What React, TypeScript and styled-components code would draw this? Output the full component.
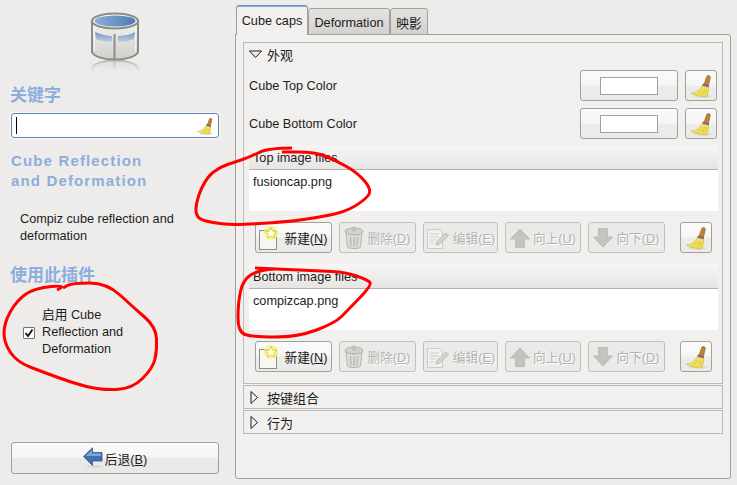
import React from 'react';
import styled, { createGlobalStyle } from 'styled-components';

const GlobalStyle = createGlobalStyle`
  html, body {
    margin: 0;
    padding: 0;
    background: #edecea;
  }

  body {
    font-family: "Liberation Sans", "Noto Sans CJK SC", sans-serif;
    font-size: 12.7px;
    color: #1c1c1c;
  }
`;

const Window = styled.div`
  position: relative;
  display: grid;
  grid-template-columns: 235px 1fr;
  width: 737px;
  height: 485px;
  overflow: hidden;
  background: #edecea;
`;

const Sidebar = styled.aside`
  display: flex;
  flex-direction: column;
  padding: 12px 16px 11px 11px;
`;

const Logo = styled.svg`
  display: block;
  align-self: center;
  width: 50px;
  height: 60px;
`;

const SideHeading = styled.h2<{ $gap: number }>`
  margin: ${p => p.$gap}px 0 0 -1px;
  font-size: 17px;
  line-height: 20px;
  font-weight: 700;
  color: #8daedd;
`;

const SearchBox = styled.div`
  display: flex;
  align-items: center;
  justify-content: space-between;
  box-sizing: border-box;
  height: 25px;
  margin-top: 7px;
  padding: 0 4px 0 4px;
  background: #fff;
  border: 1px solid #5f83b5;
  border-radius: 3px;
  box-shadow: 0 0 0 1px #f8f8f7;
`;

const Caret = styled.span`
  display: block;
  width: 1px;
  height: 17px;
  background: #000;
`;

const PluginTitle = styled.h1`
  margin: 13px 0 0;
  font-size: 15px;
  line-height: 20px;
  font-weight: 700;
  letter-spacing: 1.15px;
  color: #8daedd;
`;

const Description = styled.p`
  margin: 20px 0 0;
  padding-left: 9px;
  line-height: 17px;
`;

const EnableRow = styled.label`
  display: flex;
  align-items: center;
  gap: 7px;
  margin-top: 21px;
  padding-left: 12px;
  line-height: 17px;
`;

const CheckBox = styled.span`
  display: flex;
  align-items: center;
  justify-content: center;
  flex: none;
  box-sizing: border-box;
  width: 12px;
  height: 12px;
  background: #fff;
  border: 1px solid #77746f;
  border-radius: 1px;
`;

const EnableText = styled.span`
  width: 96px;
`;

const BackButton = styled.button`
  display: flex;
  align-items: center;
  justify-content: center;
  gap: 2px;
  box-sizing: border-box;
  height: 32px;
  margin-top: auto;
  padding: 0;
  font: inherit;
  color: inherit;
  border: 1px solid #a3a09b;
  border-radius: 3px;
  background: linear-gradient(#fbfbfb 0%, #f5f5f4 48%, #ebeae8 52%, #e9e8e6 100%);
`;

const Main = styled.main`
  display: flex;
  flex-direction: column;
  padding: 5px 6px 6px 0;
`;

const TabBar = styled.div`
  display: flex;
  align-items: flex-end;
  height: 30px;
  padding-left: 1px;
  margin-bottom: -1px;
`;

const Tab = styled.div<{ $active?: boolean; $width: number }>`
  position: relative;
  display: flex;
  align-items: center;
  justify-content: center;
  box-sizing: border-box;
  width: ${p => p.$width}px;
  height: ${p => (p.$active ? 30 : 27)}px;
  padding-top: ${p => (p.$active ? 0 : 2)}px;
  border: 1px solid #a3a09b;
  border-bottom: ${p => (p.$active ? '0' : '1px solid #a3a09b')};
  border-radius: 3px 3px 0 0;
  border-top-color: ${p => (p.$active ? '#6d93c5' : '#a3a09b')};
  box-shadow: ${p => (p.$active ? 'inset 0 1px 0 #8dacd6' : 'none')};
  background: ${p => (p.$active ? '#f1f0ee' : 'linear-gradient(#e4e3e1, #d3d2cf)')};
  z-index: ${p => (p.$active ? 1 : 0)};
`;

const TabPanel = styled.section`
  display: flex;
  flex-direction: column;
  flex: 1;
  box-sizing: border-box;
  gap: 1px;
  padding: 7px;
  background: #f1f0ee;
  border: 1px solid #a3a09b;
  border-radius: 0 3px 3px 3px;
`;

const Expander = styled.div<{ $open?: boolean }>`
  box-sizing: border-box;
  border: 1px solid #bcbab6;
  padding: 0 5px ${p => (p.$open ? 11 : 0)}px 5px;
`;

const ExpanderHead = styled.div`
  display: flex;
  align-items: center;
  gap: 5px;
  height: 22px;
  font-size: 13px;
`;

const ColorRow = styled.div`
  display: flex;
  align-items: center;
  gap: 7px;
  height: 31px;
  margin-top: 7px;

  ${ExpanderHead} + & {
    margin-top: 5px;
  }
`;

const RowLabel = styled.span`
  flex: 1;
`;

const Button = styled.button<{ $width: number; $disabled?: boolean }>`
  display: flex;
  align-items: center;
  justify-content: center;
  flex: none;
  gap: 3px;
  box-sizing: border-box;
  width: ${p => p.$width}px;
  height: 31px;
  padding: 0;
  font: inherit;
  color: ${p => (p.$disabled ? '#b3b2af' : 'inherit')};
  text-shadow: ${p => (p.$disabled ? '1px 1px 0 #fff' : 'none')};
  border: 1px solid ${p => (p.$disabled ? '#c2c0bc' : '#a3a09b')};
  border-radius: 3px;
  background: ${p => (p.$disabled
    ? '#ebeae8'
    : 'linear-gradient(#fafafa 0%, #f6f6f5 48%, #ececea 52%, #eaeae8 100%)')};
`;

const Swatch = styled.span`
  display: block;
  box-sizing: border-box;
  width: 58px;
  height: 18px;
  background: #fff;
  border: 1px solid #a3a09b;
`;

const ImageList = styled.div`
  margin-top: 6px;
  margin-right: -1px;
`;

const ToolbarRow = styled.div`
  display: flex;
  gap: 7px;
  margin-top: 11px;
  padding: 0 5px 0 6px;

  & > :last-child {
    margin-left: auto;
  }

  & + ${ImageList} {
    margin-top: 11px;
  }
`;

const ListHead = styled.div`
  box-sizing: border-box;
  height: 25px;
  padding: 6px 0 0 4px;
  background: linear-gradient(#f6f6f5, #e6e5e3);
  border-bottom: 1px solid #b4b2ae;
`;

const ListBody = styled.div`
  box-sizing: border-box;
  height: 41px;
  padding: 4px 4px;
  background: #fff;
  line-height: 17px;
`;

const Scribble = styled.svg`
  position: absolute;
  inset: 0;
  width: 737px;
  height: 485px;
  pointer-events: none;
`;

function Broom({ size = 24 }: { size?: number }) {
  return (
    <svg width={size} height={size} viewBox='2 1 20 22'>
      <ellipse cx='13.500' cy='21.300' rx='8.500' ry='1.500' fill='#dcdbd8' />
      <path d='M14.800 10.500 17.300 3.400c.6-1.700 3.500-1 3.200.8L18.800 11.500z' fill='#c08436' stroke='#8a5a20' strokeWidth='.6' />
      <path d='M13.800 9.800 19.500 11.500 19 13.400 13 11.700z' fill='#7d5a9c' />
      <path d='M13 11.700 19 13.400C19 17 18.300 20 17.300 22 14 21.900 7.500 21 2.800 18.600 7.500 18.200 11 16 13 11.700z' fill='#f2e35c' stroke='#c7ab30' strokeWidth='.5' />
      <path d='M9.500 19.800 13.500 14.500M13 20.800 15.500 15M15.800 21 17 15' stroke='#d0b436' strokeWidth='.6' fill='none' />
    </svg>
  );
}

function BackArrow() {
  return (
    <svg width='20' height='22' viewBox='0 0 20 22'>
      <ellipse cx='11' cy='19.500' rx='8' ry='1.500' fill='#d9d8d5' />
      <path d='M.5 9.500 9.500.8V5.500H19V14H9.500V18.500z' fill='#3f72ae' stroke='#2f5b94' strokeWidth='.8' />
      <path d='M2.500 9 9 3V6.500H18V9z' fill='#7ea6d4' />
    </svg>
  );
}

function NewIcon() {
  return (
    <svg width='22' height='24' viewBox='0 0 22 24'>
      <rect x='.5' y='4.500' width='17' height='19' fill='#f6f6f4' stroke='#8f8d88' />
      <circle cx='12' cy='7' r='7' fill='#f4f47a' opacity='.85' />
      <path d='M12 1.500 13.700 5.200 17.500 5.600 14.700 8.200 15.500 12 12 10 8.500 12 9.300 8.200 6.500 5.600 10.300 5.200z' fill='#fff' stroke='#e3d22a' />
    </svg>
  );
}

function TrashIcon() {
  return (
    <svg width='20' height='24' viewBox='0 0 20 24'>
      <ellipse cx='10' cy='5.500' rx='9' ry='3.500' fill='#d3d2cf' stroke='#b5b4b0' />
      <circle cx='10' cy='3' r='2' fill='#cac9c6' stroke='#b5b4b0' />
      <path d='M2 7 3.500 21c1 2 12 2 13 0L18 7c-3 2.500-13 2.500-16 0z' fill='#dcdbd8' stroke='#b5b4b0' />
      <path d='M6.500 11 7 20.500M10 11.500V21M13.500 11 13 20.500' stroke='#bbbab6' strokeWidth='1.400' />
    </svg>
  );
}

function EditIcon() {
  return (
    <svg width='24' height='24' viewBox='0 0 24 24'>
      <path d='M1.500 3.500H13.500L16.500 6.500V22.500H1.500z' fill='#f1f0ee' stroke='#cdccc8' />
      <path d='M4 8H13M4 11H13M4 14H10M4 17H8' stroke='#d0cfcb' />
      <path d='M10 19 11 15.500 20 7 22.500 9.500 13.500 18z' fill='#d5d4d1' stroke='#bab9b5' />
    </svg>
  );
}

function UpArrow() {
  return (
    <svg width='20' height='20' viewBox='0 0 20 20'>
      <path d='M10 1 19.500 11H14.500V19.500H5.500V11H.5z' fill='#c4c3c0' stroke='#bcbbb7' />
    </svg>
  );
}

function DownArrow() {
  return (
    <svg width='20' height='20' viewBox='0 0 20 20'>
      <path d='M10 19 19.500 9H14.500V.5H5.500V9H.5z' fill='#c4c3c0' stroke='#bcbbb7' />
    </svg>
  );
}

function Triangle({ open }: { open?: boolean }) {
  return (
    <svg width='13' height='13' viewBox='0 0 13 13'>
      {open
        ? <path d='M.5 3H12.500L6.500 9.500z' fill='#f1f0ee' stroke='#1c1c1c' />
        : <path d='M2 .5V12.500L8.500 6.500z' fill='#f1f0ee' stroke='#1c1c1c' />}
    </svg>
  );
}

function CubeLogo() {
  const body = (
    <>
      <path d='M2 9V40C6 50 44 50 48 40V9z' fill='url(#wall)' stroke='#8b8b87' strokeWidth='2' />
      <path d='M5 20C12 23 19 24 22 24V30C14 30 10 29 6 27zM28 24C33 24 40 23 45 20L44 27C40 29 34 30 28 30z' fill='url(#band)' />
      <path d='M24.500 22V47' stroke='#8b8b87' strokeWidth='2' />
      <path d='M4 12 4.500 39.500M46 12 45.500 39.500' stroke='#fff' strokeWidth='1' opacity='.8' />
    </>
  );

  return (
    <Logo viewBox='0 0 50 60'>
      <defs>
        <linearGradient id='wall' x1='0' y1='0' x2='0' y2='1'>
          <stop offset='0' stopColor='#f2f2f0' />
          <stop offset='1' stopColor='#cfcfcb' />
        </linearGradient>
        <linearGradient id='band' x1='0' y1='0' x2='0' y2='1'>
          <stop offset='0' stopColor='#6f94c4' />
          <stop offset='1' stopColor='#c4d0df' />
        </linearGradient>
        <linearGradient id='top' x1='0' y1='0' x2='1' y2='0'>
          <stop offset='0' stopColor='#8aaed8' />
          <stop offset='1' stopColor='#4f7bb4' />
        </linearGradient>
        <linearGradient id='fade' x1='0' y1='0' x2='0' y2='1'>
          <stop offset='0' stopColor='#fff' stopOpacity='.55' />
          <stop offset='1' stopColor='#fff' stopOpacity='0' />
        </linearGradient>
        <mask id='fadeMask'>
          <rect x='0' y='48' width='50' height='12' fill='url(#fade)' />
        </mask>
      </defs>
      {body}
      <ellipse cx='25' cy='9' rx='23' ry='7.500' fill='#f4f4f2' stroke='#8b8b87' strokeWidth='2' />
      <ellipse cx='25' cy='9' rx='20.500' ry='5.500' fill='url(#top)' />
      <g mask='url(#fadeMask)'>
        <g transform='matrix(1 0 0 -1 0 96)'>
          {body}
        </g>
      </g>
    </Logo>
  );
}

const TOOLBAR = [
  { label: '删除', key: 'D', width: 77, icon: <TrashIcon /> },
  { label: '编辑', key: 'E', width: 75, icon: <EditIcon /> },
  { label: '向上', key: 'U', width: 76, icon: <UpArrow /> },
  { label: '向下', key: 'D', width: 77, icon: <DownArrow /> }
];

function ListActions() {
  return (
    <ToolbarRow>
      <Button $width={77}>
        <NewIcon />
        <span>新建(<u>N</u>)</span>
      </Button>
      {TOOLBAR.map(({ icon, key, label, width }) => (
        <Button $disabled $width={width} key={label}>
          {icon}
          <span>{label}(<u>{key}</u>)</span>
        </Button>
      ))}
      <Button $width={32}><Broom /></Button>
    </ToolbarRow>
  );
}

const ANNOTATIONS = [
  [[292, 148], [268, 148], [250, 157], [235, 162], [220, 167], [207, 177], [197, 198], [195, 218], [213, 223], [235, 225], [285, 222], [315, 218], [345, 212], [365, 200], [372, 190], [358, 173], [335, 160], [315, 152], [282, 152]],
  [[275, 269], [258, 270], [243, 280], [238, 303], [238, 332], [252, 337], [298, 337], [335, 323], [348, 310], [372, 285], [368, 280], [345, 272], [320, 271], [255, 268]],
  [[57, 290], [68, 285], [35, 288], [17, 300], [4, 323], [4, 343], [17, 362], [43, 372], [73, 383], [100, 390], [132, 389], [153, 368], [157, 350], [156, 327], [133, 307], [107, 283], [72, 283], [63, 288]]
];

// rounds the traced points off so the marker stroke doesn't look like a polygon
function smooth(points: number[][]): string {
  let d = `M${points[0][0]} ${points[0][1]}`;

  for (let i = 1; i < points.length - 1; i++) {
    const [x, y] = points[i];
    const [nx, ny] = points[i + 1];

    d += ` Q${x} ${y} ${(x + nx) / 2} ${(y + ny) / 2}`;
  }

  const [lx, ly] = points[points.length - 1];

  return `${d} L${lx} ${ly}`;
}

export default function App() {
  return (
    <Window>
      <GlobalStyle />
      <Sidebar>
        <CubeLogo />
        <SideHeading $gap={14}>关键字</SideHeading>
        <SearchBox>
          <Caret />
          <Broom size={18} />
        </SearchBox>
        <PluginTitle>Cube Reflection<br />and Deformation</PluginTitle>
        <Description>Compiz cube reflection and deformation</Description>
        <SideHeading $gap={21}>使用此插件</SideHeading>
        <EnableRow>
          <CheckBox>
            <svg width='10' height='10' viewBox='0 0 10 10'>
              <path d='M1.500 5 4 8 8.500 1.500' fill='none' stroke='#111' strokeWidth='1.800' />
            </svg>
          </CheckBox>
          <EnableText>启用 Cube Reflection and Deformation</EnableText>
        </EnableRow>
        <BackButton>
          <BackArrow />
          <span>后退(<u>B</u>)</span>
        </BackButton>
      </Sidebar>
      <Main>
        <TabBar>
          <Tab $active $width={72}>Cube caps</Tab>
          <Tab $width={82}>Deformation</Tab>
          <Tab $width={38}>映影</Tab>
        </TabBar>
        <TabPanel>
          <Expander $open>
            <ExpanderHead><Triangle open />外观</ExpanderHead>
            <ColorRow>
              <RowLabel>Cube Top Color</RowLabel>
              <Button $width={98}><Swatch /></Button>
              <Button $width={32}><Broom /></Button>
            </ColorRow>
            <ColorRow>
              <RowLabel>Cube Bottom Color</RowLabel>
              <Button $width={98}><Swatch /></Button>
              <Button $width={32}><Broom /></Button>
            </ColorRow>
            <ImageList>
              <ListHead>Top image files</ListHead>
              <ListBody>fusioncap.png</ListBody>
            </ImageList>
            <ListActions />
            <ImageList>
              <ListHead>Bottom image files</ListHead>
              <ListBody>compizcap.png</ListBody>
            </ImageList>
            <ListActions />
          </Expander>
          <Expander>
            <ExpanderHead><Triangle />按键组合</ExpanderHead>
          </Expander>
          <Expander>
            <ExpanderHead><Triangle />行为</ExpanderHead>
          </Expander>
        </TabPanel>
      </Main>
      <Scribble viewBox='0 0 737 485'>
        {ANNOTATIONS.map(points => (
          <path d={smooth(points)} fill='none' key={points[0].join()} stroke='#ff0000' strokeLinejoin='round' strokeWidth='3' />
        ))}
      </Scribble>
    </Window>
  );
}
